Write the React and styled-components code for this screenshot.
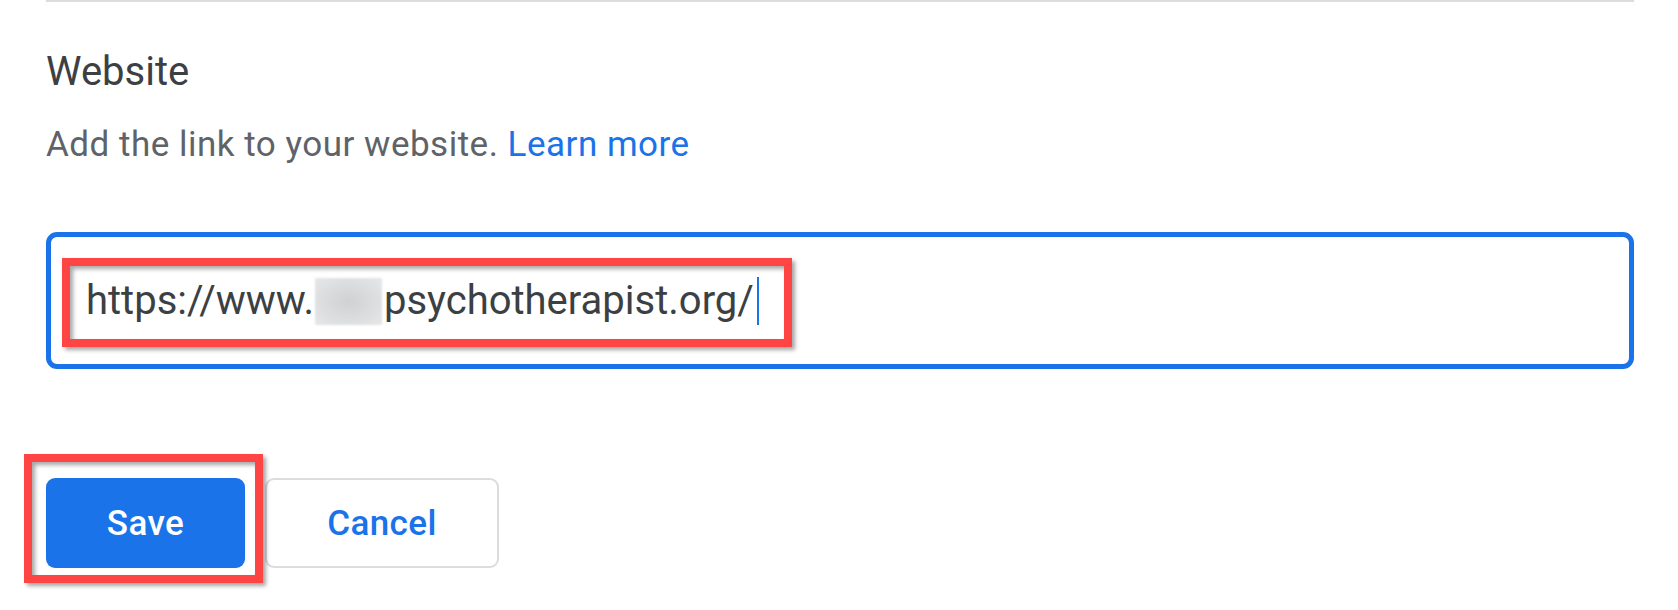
import React from 'react';
import styled, { createGlobalStyle } from 'styled-components';

const GlobalStyle = createGlobalStyle`
  html, body {
    margin: 0;
    padding: 0;
    background: #ffffff;
  }
  body {
    min-height: 610px;
    font-family: Roboto, "Liberation Sans", Arial, sans-serif;
    -webkit-font-smoothing: antialiased;
  }
`;

const Section = styled.section`
  width: 1588px;
  margin-left: 46px;
  border-top: 2px solid #dadce0;
  padding: 44px 0 42px;
  box-sizing: border-box;
`;

const Title = styled.h2`
  margin: 0;
  font-size: 40px;
  line-height: 52px;
  font-weight: 400;
  color: #3c4043;
`;

const Description = styled.p`
  margin: 22px 0 0;
  font-size: 35px;
  line-height: 50px;
  letter-spacing: 0.5px;
  color: #5f6368;
`;

const Link = styled.a`
  color: #1a73e8;
  text-decoration: none;
`;

const InputBox = styled.div`
  margin-top: 62px;
  height: 137px;
  box-sizing: border-box;
  border: 5px solid #1a73e8;
  border-radius: 11px;
  display: flex;
  align-items: center;
  padding: 0 35px;
`;

const InputText = styled.div`
  position: relative;
  display: flex;
  align-items: center;
  font-size: 40px;
  line-height: 48px;
  color: #3c4043;
  white-space: pre;
`;

const Blurred = styled.span`
  display: inline-block;
  width: 67px;
  height: 47px;
  margin: 2px 2px 0 1px;
  background: radial-gradient(ellipse at center, #cfd1d3 0%, #dcdddf 55%, #e6e7e8 100%);
  filter: blur(0.8px);
`;

const Caret = styled.span`
  display: inline-block;
  width: 2px;
  height: 48px;
  margin-left: 3px;
  background: #1a73e8;
`;

const Marked = styled.div`
  position: relative;
  display: flex;
`;

const RedMark = styled.span`
  position: absolute;
  top: ${p => p.$top}px;
  right: ${p => p.$right}px;
  bottom: ${p => p.$bottom}px;
  left: ${p => p.$left}px;
  border: 8px solid #ff4444;
  box-shadow: 3px 3px 4px rgba(0, 0, 0, 0.35), inset 3px 3px 4px rgba(0, 0, 0, 0.35);
  pointer-events: none;
`;

const ButtonRow = styled.div`
  margin-top: 109px;
  display: flex;
  gap: 20px;
`;

const Button = styled.button`
  height: 90px;
  width: ${p => p.$width}px;
  box-sizing: border-box;
  border-radius: 9px;
  font-family: Roboto, "Liberation Sans", Arial, sans-serif;
  font-size: 35px;
  font-weight: 500;
  letter-spacing: 0.4px;
  cursor: pointer;
  background: ${p => (p.$primary ? '#1a73e8' : '#ffffff')};
  color: ${p => (p.$primary ? '#ffffff' : '#1a73e8')};
  border: ${p => (p.$primary ? 'none' : '2px solid #dadce0')};
  padding: 0;
`;

export default function App() {
  return (
    <>
      <GlobalStyle />
      <Section>
        <Title>Website</Title>
        <Description>
          Add the link to your website. <Link href="#">Learn more</Link>
        </Description>
        <InputBox>
          <InputText>
            https://www.<Blurred />psychotherapist.org/<Caret />
            <RedMark $top={-18} $right={-33} $bottom={-22} $left={-24} />
          </InputText>
        </InputBox>
        <ButtonRow>
          <Marked>
            <Button $primary $width={199}>Save</Button>
            <RedMark $top={-24} $right={-18} $bottom={-15} $left={-22} />
          </Marked>
          <Button $width={234}>Cancel</Button>
        </ButtonRow>
      </Section>
    </>
  );
}
